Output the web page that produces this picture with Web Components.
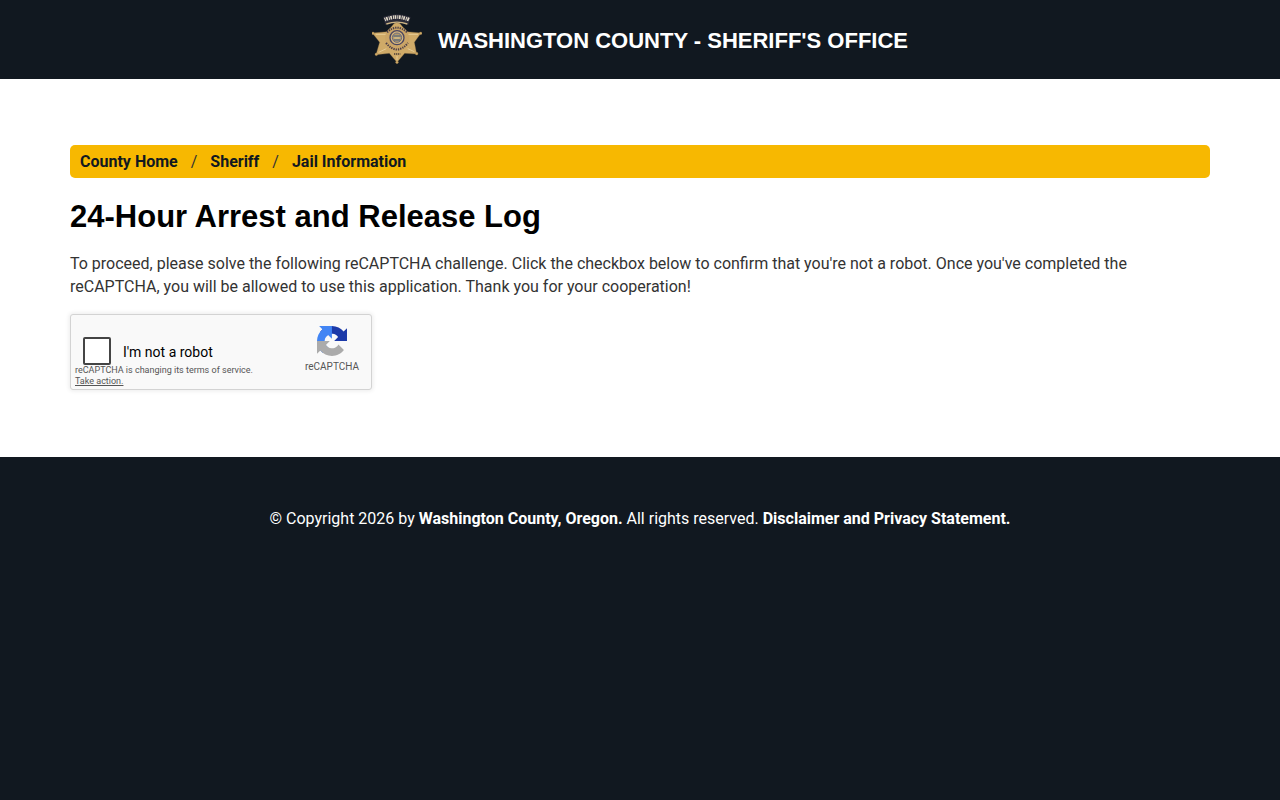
<!DOCTYPE html>
<html lang="en">
<head>
<meta charset="utf-8">
<meta name="viewport" content="width=device-width, initial-scale=1">
<title>24-Hour Arrest and Release Log</title>
<style>
  html{
    --navy: #111820;
    --gold: #f7b801;
    --gutter: 15px;
  }
  body{
    margin: 0;
    background: var(--navy);
    color: #333;
    font: 16px/23px Roboto, "Liberation Sans", sans-serif;
  }
</style>
</head>
<body>

<site-header>Washington County - Sheriff's Office</site-header>

<page-content>
  <bread-crumbs slot="crumbs"></bread-crumbs>
  <span slot="title">24-Hour Arrest and Release Log</span>
  <span slot="intro">To proceed, please solve the following reCAPTCHA challenge. Click the checkbox below to confirm that you're not a robot. Once you've completed the reCAPTCHA, you will be allowed to use this application. Thank you for your cooperation!</span>
  <captcha-box></captcha-box>
</page-content>

<site-footer></site-footer>

<script>
// attaches an open shadow root with the given markup
class BaseElement extends HTMLElement{

  connectedCallback(){
    if(this.shadowRoot){ return; }
    let template = document.createElement('template');
    template.innerHTML = this.template();
    this.attachShadow({ mode: 'open' }).appendChild(template.content.cloneNode(true));
  }
}

class SheriffBadge extends BaseElement{

  template(){
    return `
      <style>
        :host{ display: block; width: 50px; height: 50px; }
        svg{ display: block; width: 100%; height: 100%; }
      </style>

      <svg viewBox="33 27 150 150" aria-hidden="true">
        <g fill="#cfaa68" stroke="#9a7a45" stroke-width="1">
          <path d="M108 45 L137 80 L180 84 L160 112 L167 147 L131 145 L108 172 L85 145 L45 149 L56 112 L34 84 L79 80 Z"/>
          <circle cx="36" cy="85" r="4"/>
          <circle cx="179" cy="85" r="4"/>
          <circle cx="46" cy="148" r="4"/>
          <circle cx="167" cy="146" r="4"/>
          <circle cx="108" cy="172" r="4"/>
        </g>
        <path d="M44 88 L78 88 M137 88 L171 88 M53 142 L76 131 M160 140 L140 131 M108 153 V166" stroke="#e6cb94" stroke-width="3" fill="none"/>
        <path d="M66 36 Q108 20 149 36 L142 60 Q108 48 73 60 Z" fill="#2b2b38"/>
        <path d="M71 44 Q108 28 144 44" fill="none" stroke="#e4dccb" stroke-width="11" stroke-dasharray="3 2 5 3"/>
        <path d="M76 57 Q108 46 139 57" fill="none" stroke="#cdb483" stroke-width="4"/>
        <circle cx="108" cy="99" r="36" fill="#cba566"/>
        <path d="M78 82 Q108 54 138 82" fill="none" stroke="#4b3e48" stroke-width="6" stroke-dasharray="4 3"/>
        <path d="M75 114 Q108 153 141 114" fill="none" stroke="#4b3e48" stroke-width="6" stroke-dasharray="4 3"/>
        <path d="M99 147 H118" stroke="#4b3e38" stroke-width="5" stroke-dasharray="4 2"/>
        <circle cx="108" cy="98" r="21" fill="#d6b67a" stroke="#4b4660" stroke-width="4"/>
        <circle cx="108" cy="98" r="14" fill="#b59a69" stroke="#6c6c80" stroke-width="3"/>
        <path d="M97 93 H119 M98 105 H118" stroke="#68717b" stroke-width="4"/>
        <path d="M100 99 H116" stroke="#d8c28e" stroke-width="4"/>
      </svg>
    `;
  }
}

class SiteHeader extends BaseElement{

  template(){
    return `
      <style>
        :host{
          display: block;
          background: var(--navy);
          color: #fff;
        }
        header{
          display: flex;
          align-items: center;
          justify-content: center;
          gap: 16px;
          padding: 14px var(--gutter) 15px;
        }
        strong{
          padding-top: 4px;
          font: bold 22px/28px "Liberation Sans", sans-serif;
          text-transform: uppercase;
        }
      </style>

      <header>
        <sheriff-badge></sheriff-badge>
        <strong><slot></slot></strong>
      </header>
    `;
  }
}

class PageContent extends BaseElement{

  template(){
    return `
      <style>
        :host{
          display: block;
          background: #fff;
          padding: 66px 0 67px;
        }
        main{
          max-width: 1140px;
          margin: 0 auto;
          padding: 0 var(--gutter);
        }
        h1{
          margin: 20px 0 16px;
          color: #000;
          font: bold 31px/38px "Liberation Sans", sans-serif;
        }
        p{ margin: 0 0 16px; }
      </style>

      <main>
        <slot name="crumbs"></slot>
        <h1><slot name="title"></slot></h1>
        <p><slot name="intro"></slot></p>
        <slot></slot>
      </main>
    `;
  }
}

class BreadCrumbs extends BaseElement{

  template(){
    return `
      <style>
        :host{
          display: block;
          background: var(--gold);
          border-radius: 5px;
        }
        ol{
          display: flex;
          flex-wrap: wrap;
          margin: 0;
          padding: 5px 10px;
          list-style: none;
        }
        li + li::before{
          content: "/";
          padding: 0 13px;
        }
        a{
          color: var(--navy);
          font-weight: bold;
          text-decoration: none;
        }
      </style>

      <nav aria-label="Breadcrumb">
        <ol>
          <li><a href="#home">County Home</a></li>
          <li><a href="#sheriff">Sheriff</a></li>
          <li><a href="#jail">Jail Information</a></li>
        </ol>
      </nav>
    `;
  }
}

class CaptchaBox extends BaseElement{

  template(){
    return `
      <style>
        :host{
          display: grid;
          grid-template-columns: 1fr 78px;
          box-sizing: border-box;
          max-width: 302px;
          border: 1px solid #d3d3d3;
          border-radius: 3px;
          background: #f9f9f9;
          box-shadow: 0 0 4px 1px rgba(0, 0, 0, .08);
          color: #555;
          font-family: Roboto, sans-serif;
        }
        .check{
          display: flex;
          align-items: center;
          gap: 12px;
          padding: 22px 0 0 12px;
        }
        input{
          appearance: none;
          box-sizing: border-box;
          width: 28px;
          height: 28px;
          margin: 0;
          border: 2px solid #444;
          border-radius: 2px;
          background: #fff;
        }
        label{
          padding-top: 2px;
          color: #000;
          font-size: 14px;
          line-height: 17px;
        }
        small{
          display: block;
          padding: 0 4px 2px;
          font-size: 9px;
          line-height: 11px;
        }
        small a{ display: table; color: inherit; }
        .brand{
          padding-top: 11px;
          text-align: center;
          font-size: 10px;
          line-height: 12px;
        }
        svg{
          display: block;
          width: 30px;
          height: 30px;
          margin: 0 auto 5px;
        }
      </style>

      <div>
        <div class="check">
          <input type="checkbox" id="robot">
          <label for="robot">I'm not a robot</label>
        </div>
        <small>reCAPTCHA is changing its terms of service. <a href="#action">Take action.</a></small>
      </div>
      <div class="brand">
        <svg viewBox="0 0 64 64" aria-hidden="true">
          <path fill="#1c3aa9" d="M64 31.955l-.033-1.37V4.687l-7.16 7.16C50.948 4.674 42.033.093 32.05.093c-10.4 0-19.622 4.96-25.458 12.64l11.736 11.86a15.55 15.55 0 0 1 4.754-5.334c2.05-1.6 4.952-2.906 8.968-2.906.485 0 .86.057 1.135.163 4.976.393 9.288 3.14 11.828 7.124l-8.307 8.307L64 31.953"/>
          <path fill="#4285f4" d="M31.862.094l-1.37.033H4.594l7.16 7.16C4.58 13.147 0 22.06 0 32.046c0 10.4 4.96 19.622 12.64 25.458L24.5 45.768a15.55 15.55 0 0 1-5.334-4.754c-1.6-2.05-2.906-4.952-2.906-8.968 0-.485.057-.86.163-1.135.393-4.976 3.14-9.288 7.124-11.828l8.307 8.307L31.86.095"/>
          <path fill="#ababab" d="M.001 32.045l.033 1.37v25.898l7.16-7.16c5.86 7.173 14.774 11.754 24.76 11.754 10.4 0 19.622-4.96 25.458-12.64l-11.736-11.86a15.55 15.55 0 0 1-4.754 5.334c-2.05 1.6-4.952 2.906-8.968 2.906-.485 0-.86-.057-1.135-.163-4.976-.393-9.288-3.14-11.828-7.124l8.307-8.307c-10.522.04-22.4.066-27.295-.005"/>
        </svg>
        reCAPTCHA
      </div>
    `;
  }
}

class SiteFooter extends BaseElement{

  template(){
    return `
      <style>
        :host{
          display: block;
          background: var(--navy);
          color: #fff;
        }
        footer{
          padding: 50px var(--gutter);
          text-align: center;
        }
        a{
          color: inherit;
          font-weight: bold;
          text-decoration: none;
        }
      </style>

      <footer>
        © Copyright 2026 by <a href="#county">Washington County, Oregon.</a>
        All rights reserved. <a href="#privacy">Disclaimer and Privacy Statement.</a>
      </footer>
    `;
  }
}

window.customElements.define("sheriff-badge", SheriffBadge);
window.customElements.define("site-header", SiteHeader);
window.customElements.define("page-content", PageContent);
window.customElements.define("bread-crumbs", BreadCrumbs);
window.customElements.define("captcha-box", CaptchaBox);
window.customElements.define("site-footer", SiteFooter);
</script>
</body>
</html>
